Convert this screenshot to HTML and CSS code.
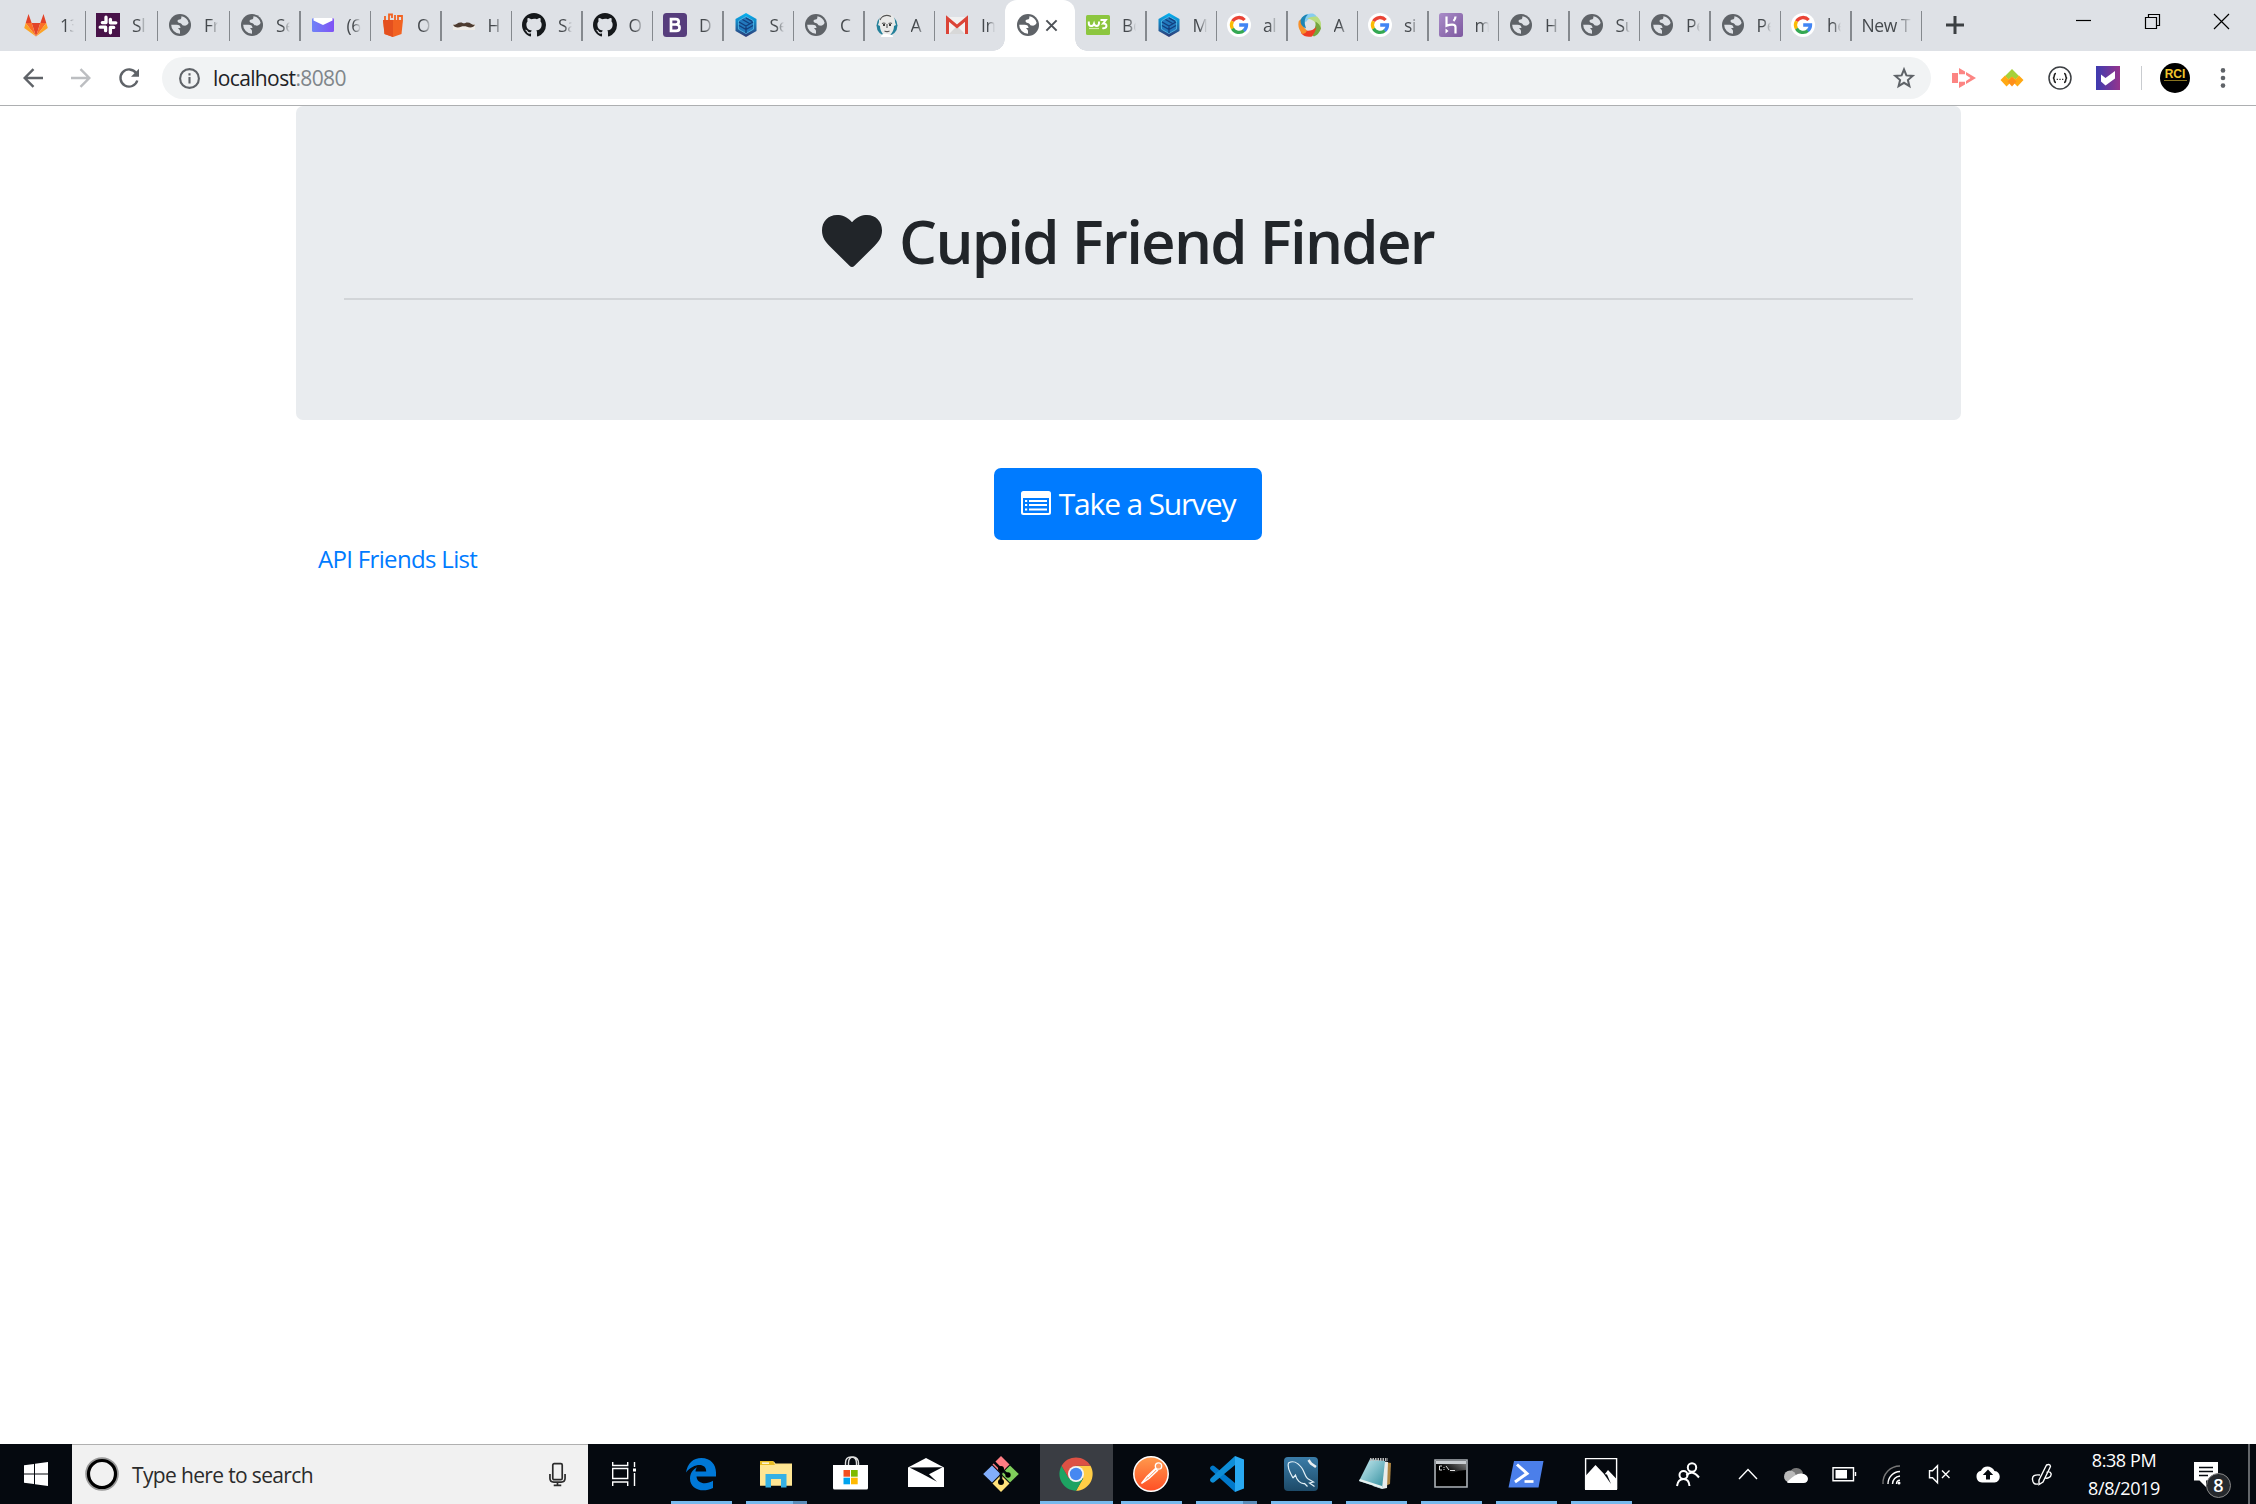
FILE: index.html
```html
<!DOCTYPE html>
<html lang="en">
<head>
<meta charset="utf-8">
<title>Cupid Friend Finder</title>
<link rel="stylesheet" href="styles.css">
</head>
<body>
<svg class="sprite" aria-hidden="true">
  <defs>
    <linearGradient id="g-yahoo" x1="0" x2="1"><stop offset="0" stop-color="#6f83f7"/><stop offset="1" stop-color="#8052f5"/></linearGradient>
    <linearGradient id="g-heroku" x1="0" y1="0" x2="1" y2="1"><stop offset="0" stop-color="#a98cc8"/><stop offset="1" stop-color="#7d589f"/></linearGradient>
    <linearGradient id="g-check" x1="0" x2="1"><stop offset="0" stop-color="#3d3bb0"/><stop offset="1" stop-color="#96348c"/></linearGradient>
    <linearGradient id="g-post" x1="0" y1="0" x2="0" y2="1"><stop offset="0" stop-color="#ff9a4d"/><stop offset="1" stop-color="#ff4f25"/></linearGradient>
    <linearGradient id="g-mysql" x1="0" y1="0" x2="0" y2="1"><stop offset="0" stop-color="#3a7ca8"/><stop offset="1" stop-color="#1d4a68"/></linearGradient>
    <linearGradient id="g-note" x1="0" y1="0" x2="1" y2="1"><stop offset="0" stop-color="#cfeef2"/><stop offset=".5" stop-color="#7fbfca"/><stop offset="1" stop-color="#2f8c9b"/></linearGradient>
    <linearGradient id="g-cmd" x1="0" y1="1" x2="1" y2="0"><stop offset=".5" stop-color="#000"/><stop offset="1" stop-color="#777"/></linearGradient>
    <linearGradient id="g-hex" x1="0" y1="0" x2="0" y2="1"><stop offset="0" stop-color="#04b4f4"/><stop offset="1" stop-color="#2f3b76"/></linearGradient>
  </defs>
  <symbol id="globe" viewBox="0 0 24 24"><circle cx="12" cy="12" r="11" fill="#5f6368"/><path d="M3.200 11.800h5.300c2.800 0 4 1.200 4 3.300h-2.300c0 1.300 1.800 1.300 1.800 3v2.700A8.900 8.900 0 0 1 3.200 11.800ZM13.400 3.200a9 9 0 0 1 7.200 6.600c-.6 2-2.300 3-4.600 2.800-2.600-.2-1.900-2.300-4.200-2.600-2.800-.4-3-3.300-.4-3.500 2-.2 2-1.500 2-3.300Z" fill="currentColor"/></symbol>
  <symbol id="gitlab" viewBox="0 0 24 24"><path d="M12 23.500 7.700 10h8.600Z" fill="#e24329"/><path d="M12 23.500 1.700 10h6Z" fill="#fc6d26"/><path d="M12 23.500 22.300 10h-6Z" fill="#fc6d26"/><path d="m1.700 10-1.500 5L12 23.500ZM22.300 10l1.500 5L12 23.500Z" fill="#fca326"/><path d="m1.700 10 2.800-9 3.200 9ZM22.300 10l-2.800-9-3.200 9Z" fill="#e24329"/></symbol>
  <symbol id="slack" viewBox="0 0 24 24"><path d="M0 0h24v24H0z" fill="#481349"/><g stroke="#fff" stroke-width="3.300" stroke-linecap="round"><path d="M10 4.200v5.400M14.400 6.300v3.300M14.400 14.400v5.400M9.600 14.400v3.300M4.200 14.200h5.400M6.300 9.600h3.300M14.400 9.800h5.400M14.400 14.400h3.300"/></g></symbol>
  <symbol id="yahoo" viewBox="0 0 24 24"><rect x="1" y="5" width="22" height="14" rx="1.500" fill="url(#g-yahoo)"/><path d="M2.500 5h19v2.500L12 12 2.500 7.500Z" fill="#fff"/></symbol>
  <symbol id="basket" viewBox="0 0 24 24"><path d="M2 7h20l-1.500 14L12 24l-8.500-3Z" fill="#f26322"/><path d="M2 7h10v17l-8.500-3Z" fill="#e4501f"/><path d="M4 7V3m4 4V1.500h3V5m3 2V2m3 5V3h4v4" fill="none" stroke="#f26322" stroke-width="1.800"/></symbol>
  <symbol id="moustache" viewBox="0 0 24 24"><path d="M1 11h22v6H1z" fill="#efece7"/><path d="M1 11.500c2.500 1.500 4-2 7.500-2 1.800 0 2.500.8 3.500.8s1.700-.8 3.500-.8c3.500 0 5 3.500 7.500 2-.8 3-5 3.500-8 2.300-1.500-.6-2-.5-3-.5s-1.500-.1-3 .5c-3 1.200-7.200.7-8-2.300Z" fill="#4d3b30"/></symbol>
  <symbol id="github" viewBox="0 0 16 16"><path fill="#15181b" d="M8 0C3.580 0 0 3.580 0 8c0 3.540 2.290 6.530 5.470 7.590.4.070.55-.17.55-.38v-1.490c-2.230.48-2.700-.94-2.700-.94-.36-.92-.89-1.170-.89-1.170-.73-.5.050-.49.050-.49.810.06 1.230.83 1.230.83.720 1.230 1.880.87 2.340.67.070-.52.280-.87.510-1.070-1.780-.2-3.640-.89-3.640-3.950 0-.87.310-1.590.820-2.150-.08-.2-.36-1.020.08-2.120 0 0 .67-.21 2.200.82A7.600 7.600 0 0 1 8 3.870c.68 0 1.360.09 2 .27 1.530-1.040 2.200-.82 2.200-.82.440 1.100.16 1.920.08 2.120.51.560.82 1.270.82 2.150 0 3.070-1.870 3.750-3.650 3.950.29.250.54.730.54 1.480v2.200c0 .21.150.46.550.38A8 8 0 0 0 16 8c0-4.420-3.580-8-8-8Z"/></symbol>
  <symbol id="bootstrap" viewBox="0 0 24 24"><rect width="24" height="24" rx="3.500" fill="#563d7c"/><path fill="none" stroke="#fff" stroke-width="2.700" d="M8 6.200h4.700c4 0 4 5.300 0 5.300H8h5.200c4.500 0 4.500 6.300 0 6.300H8ZM8 5v14"/></symbol>
  <symbol id="hexa" viewBox="0 0 24 24"><path d="M12 0 22.500 6v12L12 24 1.500 18V6Z" fill="url(#g-hex)"/><path d="m12 3.500 7.500 4.300v8.400L12 20.500l-7.500-4.300V7.800Z" fill="#2379bd" stroke="#5cc5ee" stroke-width=".7"/><path d="m5 9 7 4 7-4M5 12.500l7 4 7-4M12 13v7M8.500 6.500l7 4M12 5l6 3.400" fill="none" stroke="#123f7e" stroke-width="1.300"/></symbol>
  <symbol id="baby" viewBox="0 0 24 24"><circle cx="12" cy="12.500" r="10.500" fill="#23809a"/><path d="M4 9c-1-11 17-11 16 0l1 3-2 1c0 6-4 10-7 10s-7-4-7-10l-2-1Z" fill="#e9e9e8"/><path d="M6 24c0-3 3-4 6-3s6 0 6 3Z" fill="#fff"/><path d="M7 10.500q2-1 3.500 0M13.500 10.500q2-1 3.500 0M12 11v4M9.500 18q2.500 1.200 5 0M7 4q4-3 9-.5M5 7q1-3 4-4" stroke="#555" fill="none" stroke-width="1.100"/><circle cx="9" cy="12" r="1"/><circle cx="15" cy="12" r="1"/></symbol>
  <symbol id="gmail" viewBox="0 0 24 24"><rect x="1" y="4" width="22" height="17" rx="1.500" fill="#f1f1f1"/><path d="m4 21 8-8 8 8Z" fill="#d8d8d8"/><path d="M2.500 21V5.500L12 13.500l9.500-8V21" fill="none" stroke="#db4437" stroke-width="3"/></symbol>
  <symbol id="w3" viewBox="0 0 24 24"><rect y="2" width="24" height="20" rx="1.500" fill="#8cc63f"/><path d="M2.800 8.500v1.800q0 2.700 2.200 2.700t3-2.200q.6 2.200 2.700 2.200t2.300-2.700V8.500M14.500 7h5.300l-2.800 3.600c5.300-.4 4 6-.6 4.400" fill="none" stroke="#fff" stroke-width="2"/><path d="M3 15.500h10" stroke="#d4edb0" stroke-width="1.200"/></symbol>
  <symbol id="google" viewBox="0 0 24 24"><circle cx="12" cy="12" r="12" fill="#fff"/><g fill="none" stroke-width="3.300"><path d="M17.600 7A7.500 7.500 0 0 0 5.500 8.300" stroke="#ea4335"/><path d="M5.500 8.200a7.500 7.500 0 0 0 0 7.500" stroke="#fbbc05"/><path d="M5.500 15.700A7.500 7.500 0 0 0 17 17.500" stroke="#34a853"/><path d="M12.200 12h7.300c0 2.500-1 4.300-2.700 5.700" stroke="#4285f4"/></g></symbol>
  <symbol id="swirl" viewBox="0 0 24 24"><path d="M3 6.500Q7-.5 15 .6q3 1 4 4Q11 4 8 9Z" fill="#86cdf0"/><path d="M9 5.500q5-2.500 10-2 5 4.500 4 11-2 2-4 1.500 0-7-6-9.500Z" fill="#b9dc80"/><path d="M17.500 8.500q4.500 2.500 5.500 7-2 6-7 8-3-1-3.500-3.500 6-4 5-11.500Z" fill="#76a53d"/><path d="M18.500 14q-1 5-4.500 9.500-7 1.500-11-3.500 0-3 2-4 6 4.500 13.500-2Z" fill="#ef3c24"/><path d="M9 17.500q-1 3-4.500 3.500Q-1 15 .8 8q2-2.300 4.200-2-2 7 4 11.500Z" fill="#f7902a"/><path d="M2.500 7Q5 1.500 10 1.500 4.500 6 8 15.500 2 13 2.500 7Z" fill="#1d85b5"/></symbol>
  <symbol id="heroku" viewBox="0 0 24 24"><rect width="24" height="24" rx="2.500" fill="url(#g-heroku)"/><path d="M7.500 3.500v9.300c3-1.300 9-2.500 9 1.200v6.500M16.500 3.500q0 2.500-2 4.500" fill="none" stroke="#fff" stroke-width="2.200"/><path d="m6.500 15.500 3 2.500-3 2.500Z" fill="#fff"/></symbol>
</svg>

<div class="screen">
  <header class="tabstrip">
    <div class="tab wide"><svg class="fav"><use href="#gitlab"/></svg><span>13</span></div>
    <div class="tab wide"><svg class="fav"><use href="#slack"/></svg><span>Sl</span></div>
    <div class="tab wide"><svg class="fav"><use href="#globe"/></svg><span>Fr</span></div>
    <div class="tab"><svg class="fav"><use href="#globe"/></svg><span>Se</span></div>
    <div class="tab"><svg class="fav"><use href="#yahoo"/></svg><span>(6</span></div>
    <div class="tab"><svg class="fav"><use href="#basket"/></svg><span>O</span></div>
    <div class="tab"><svg class="fav"><use href="#moustache"/></svg><span>H</span></div>
    <div class="tab"><svg class="fav"><use href="#github"/></svg><span>Sa</span></div>
    <div class="tab"><svg class="fav"><use href="#github"/></svg><span>O</span></div>
    <div class="tab"><svg class="fav"><use href="#bootstrap"/></svg><span>D</span></div>
    <div class="tab"><svg class="fav"><use href="#hexa"/></svg><span>Se</span></div>
    <div class="tab"><svg class="fav"><use href="#globe"/></svg><span>C</span></div>
    <div class="tab"><svg class="fav"><use href="#baby"/></svg><span>A</span></div>
    <div class="tab before-active"><svg class="fav"><use href="#gmail"/></svg><span>In</span></div>
    <div class="tab active"><svg class="fav"><use href="#globe"/></svg><svg class="close" viewBox="0 0 14 14"><path d="m1.500 1.500 11 11m0-11-11 11"/></svg></div>
    <div class="tab"><svg class="fav"><use href="#w3"/></svg><span>Bo</span></div>
    <div class="tab"><svg class="fav"><use href="#hexa"/></svg><span>M</span></div>
    <div class="tab"><svg class="fav"><use href="#google"/></svg><span>al</span></div>
    <div class="tab"><svg class="fav"><use href="#swirl"/></svg><span>A</span></div>
    <div class="tab"><svg class="fav"><use href="#google"/></svg><span>si</span></div>
    <div class="tab"><svg class="fav"><use href="#heroku"/></svg><span>m</span></div>
    <div class="tab"><svg class="fav"><use href="#globe"/></svg><span>H</span></div>
    <div class="tab"><svg class="fav"><use href="#globe"/></svg><span>Su</span></div>
    <div class="tab"><svg class="fav"><use href="#globe"/></svg><span>Pe</span></div>
    <div class="tab"><svg class="fav"><use href="#globe"/></svg><span>Pe</span></div>
    <div class="tab"><svg class="fav"><use href="#google"/></svg><span>he</span></div>
    <div class="tab plain"><span>New T</span></div>
    <svg class="newtab" viewBox="0 0 18 18"><path d="M9 0v18M0 9h18"/></svg>
    <div class="wincontrols">
      <svg viewBox="0 0 15 15"><path d="M0 6.500h15"/></svg>
      <svg viewBox="0 0 15 15"><path d="M.5 3.500h11v11H.5zM3.500 3.500v-3h11v11h-3"/></svg>
      <svg viewBox="0 0 15 15"><path d="m0 0 15 15m0-15L0 15"/></svg>
    </div>
  </header>

  <nav class="toolbar">
    <div class="navbtns">
      <svg viewBox="0 0 20 20"><path d="M20 10H2M10.500 1.200 1.700 10l8.800 8.800"/></svg>
      <svg class="dim" viewBox="0 0 20 20"><path d="M0 10h18M9.500 1.200l8.800 8.800-8.800 8.800"/></svg>
      <svg viewBox="0 0 20 20"><path d="M17.200 5.200A8.600 8.600 0 1 0 18.300 12.500"/><path class="fill" d="M20 .8v8h-8Z"/></svg>
    </div>
    <div class="omnibox">
      <svg class="info" viewBox="0 0 21 21"><circle cx="10.500" cy="10.500" r="9.400"/><path d="M10.500 9v6.500M10.500 5.300v2.300"/></svg>
      <p class="url">localhost<span>:8080</span></p>
      <svg class="star" viewBox="0 0 22 22"><path d="m11 2.500 2.400 5.900 6.300.5-4.800 4.100 1.500 6.200-5.400-3.400-5.400 3.400L7.100 13 2.300 8.900l6.300-.5Z"/></svg>
    </div>
    <div class="exts">
      <svg viewBox="0 0 24 24"><path d="M0 7h6v10H0zM7 2l6 3.500V8H7Zm0 14h6v2.500L7 22ZM14 6l10 6-10 6v-3l4.500-3L14 9Z" fill="#fc8583"/><path d="M7 7.500h6M7 16.500h6" stroke="#fc8583" stroke-width="1.500"/></svg>
      <svg viewBox="0 0 24 24"><path d="m12 3 7 7-3.500 3.500L12 11l-3.500 2.500L5 10Z" fill="#a5d13a"/><path d="m5 9.500 3.500 3.700L12 10.500l3.500 2.700L19 9.500l4.500 4.500-6 6.500-5.500-5.500-5.500 5.500-6-6.500Z" fill="#ffa914"/><path d="m12 11 4.500 4.500-4.500 5-4.500-5Z" fill="#ff8f1a"/></svg>
      <svg viewBox="0 0 24 24"><circle cx="12" cy="12" r="11" fill="#fff" stroke="#3c3f43" stroke-width="1.500"/><path d="M8 7.500c-3 0-.5 4-3 4.500 2.500.5 0 4.500 3 4.500M16 7.500c3 0 .5 4 3 4.500-2.500.5 0 4.500-3 4.500" fill="none" stroke="#222" stroke-width="1.600"/><path d="M8.700 13.300h1.200m1.500 0h1.200m1.500 0h1.200" stroke="#222" stroke-width="1.300"/></svg>
      <svg viewBox="0 0 24 24"><path d="M0 0h24v24H0z" fill="url(#g-check)"/><path d="M5 8.500 9.500 12 19 5v7.500L9.500 19.500 5 15.500Z" fill="#fff"/></svg>
    </div>
    <div class="avatar"><b>RCI</b><i></i></div>
    <svg class="dots" viewBox="0 0 6 20"><circle cx="3" cy="2.400" r="2.300"/><circle cx="3" cy="10" r="2.300"/><circle cx="3" cy="17.600" r="2.300"/></svg>
  </nav>

  <main class="page">
    <section class="jumbotron">
      <h1><svg class="heart" viewBox="0 0 60 52"><path d="M30 7.200C35 1.500 40 0 45 0c9 0 15 6.500 15 15.500 0 7-3.500 11.500-8 16L32.500 50.800q-2.500 2.400-5 0L8 31.500c-4.500-4.500-8-9-8-16C0 6.500 6 0 15 0c5 0 10 1.500 15 7.200Z"/></svg><span>Cupid Friend Finder</span></h1>
      <hr>
    </section>
    <a class="btn" href="#"><svg viewBox="0 0 30 24"><path fill-rule="evenodd" d="M2.500 0h25A2.500 2.500 0 0 1 30 2.500v19a2.500 2.500 0 0 1-2.500 2.500h-25A2.500 2.500 0 0 1 0 21.500v-19A2.500 2.500 0 0 1 2.500 0ZM2 7v14.200q0 .8.800.8h24.400q.8 0 .8-.8V7Z"/><path d="M4 9h2.200v2H4zM8 9h18v2H8zM4 13h2.200v2H4zM8 13h18v2H8zM4 17.500h2.200v2H4zM8 17.500h18v2H8z"/></svg><span>Take a Survey</span></a>
    <a class="api" href="#">API Friends List</a>
  </main>

  <footer class="taskbar">
    <div class="start"><svg viewBox="0 0 24 24"><path d="M0 3.300 10 2v9.500H0ZM11 1.800 24 0v11.500H11ZM0 12.500h10V22L0 20.700ZM11 12.500h13V24l-13-1.800Z"/></svg></div>
    <div class="search">
      <svg class="cortana" viewBox="0 0 34 34"><circle cx="17" cy="17" r="15.300" stroke="#999" stroke-width="3"/><circle cx="17" cy="17" r="13.500" stroke="#000" stroke-width="3.200"/></svg>
      <span>Type here to search</span>
      <svg class="mic" viewBox="0 0 18 25"><rect x="4" y="1" width="10" height="17" rx="1.500"/><path d="M1 12v4.500q0 4 4 4h8q4 0 4-4V12M9 20.500V24M5 24h8"/></svg>
    </div>
    <div class="taskview"><svg viewBox="0 0 24 24"><path d="M.7 0v3.500h15V0M.7 6.500h15v10H.7zM.7 24v-4h15v4M22.500 0v5M22.500 11v13"/><path d="M21 6.500h3v3h-3z" fill="#fff" stroke="none"/></svg></div>
    <div class="apps">
      <div class="app run"><svg viewBox="0 0 36 36"><path d="M3 16.500C4.500 7 10.500 2 18.300 2 28 2 33 9 33 16.500v4H13.500c.5 7.500 10 8.500 16.500 4.300v7.300c-11 5.300-23 1-23-9.600 0-5 2.800-9.200 7-11.300-1 1.300-1.300 2.600-1.500 4.300h10.700C23.200 6 10 7.500 3 16.500Z" fill="#0078d7"/></svg></div>
      <div class="app run split"><svg viewBox="0 0 36 36"><path d="M2 5.500h14l1.500 2H34v22H2Z" fill="#ffe28a"/><path d="M2 5h13l2 4H2z" fill="#e9bd23"/><path d="M4 6.500h7v1.300H4z" fill="#fff"/><path d="M2 9h32v20.500H2z" fill="#ffe694"/><path d="M7.500 18h21v13.500H23V23H13v8.500H7.500Z" fill="#35b1e5"/></svg></div>
      <div class="app"><svg viewBox="0 0 36 36"><path d="M12.500 10V7q0-6 5.500-6t5.500 6v3M15.500 10V7q0-6 5-6 5 1 5 6v3" fill="none" stroke="#ddd" stroke-width="1.400"/><path d="M0 9h35v23q0 1.500-1.500 1.500h-32Q0 33.500 0 32Z" fill="#fff"/><path d="M10.500 14H17v6.700h-6.500z" fill="#f25022"/><path d="M18 14h6.700v6.700H18z" fill="#7fba00"/><path d="M10.500 21.700H17v6.600h-6.500z" fill="#00a4ef"/><path d="M18 21.700h6.700v6.600H18z" fill="#ffb900"/></svg></div>
      <div class="app"><svg viewBox="0 0 36 36"><path d="M0 11.500 18 2l18 9.500V31H0Z" fill="#fff"/><path d="m1.500 11.500 33-.2-13.500 7 8 7.500L14.500 18Z" fill="#05090f"/></svg></div>
      <div class="app"><svg viewBox="0 0 36 36"><path d="m18 0 8.500 8.500-8.500 8.500-8.500-8.500Z" fill="#ff7d83"/><path d="m9 9.500 8.500 8.500L9 26.500.2 18Z" fill="#82aefb"/><path d="m27 9.500 8.800 8.500-8.800 8.500-8.500-8.500Z" fill="#80cf5b"/><path d="m18 19 8.500 8.500L18 36l-8.500-8.500Z" fill="#ffe27b"/><path d="m11 6 7 7v13M18 13l7 6" fill="none" stroke="#05090f" stroke-width="2.600"/><circle cx="18" cy="13" r="3"/><circle cx="25" cy="19" r="2.700"/><circle cx="18" cy="26" r="3"/></svg></div>
      <div class="app run current"><svg viewBox="0 0 36 36"><path d="M32.500 9.800A16.700 16.700 0 0 1 18 34.700l7.200-12.500L18 9.800Z" fill="#ffcd46"/><path d="M3.600 9.700A16.700 16.700 0 0 0 18 34.700l7.200-12.500H10.800Z" fill="#1da362"/><path d="M3.600 9.700A16.700 16.700 0 0 1 32.500 9.800H18l-7.200 12.400Z" fill="#dd5144"/><circle cx="18" cy="18" r="8" fill="#f4f4f4"/><circle cx="18" cy="18" r="6.200" fill="#4688f1"/></svg></div>
      <div class="app run"><svg viewBox="0 0 36 36"><circle cx="18" cy="18" r="17.200" fill="url(#g-post)" stroke="#fff" stroke-width="1.500"/><path d="m8.500 27.500 5.500-7 8.500-8 2 2-8.500 8-7.500 5Z" fill="#ffad80" stroke="#fff" stroke-width="1.400"/><circle cx="25.500" cy="10" r="3.200" fill="#ff9a60" stroke="#fff" stroke-width="1.300"/><path d="m15 21 8-8" stroke="#fff"/></svg></div>
      <div class="app run split"><svg viewBox="0 0 36 36"><path d="M27 0v36L3.500 14.500q-3-2.500 0-4.500 1.500-1 3 .2L27 27Z" fill="#0179cb"/><path d="M27 9 6.500 26q-1.500 1.200-3 .2-3-2 0-4.700L27 0Z" fill="#0e8ed7"/><path d="m27 0 9 3.500v29L27 36Z" fill="#29a9f2"/></svg></div>
      <div class="app run"><svg viewBox="0 0 36 36"><rect x="1" y="1" width="34" height="34" rx="4" fill="url(#g-mysql)"/><path d="M10 22c-4-7-6-12-4.500-15 4-2.500 9-1 13 4.500 3 4 3.500 9 6 11l6 3.500-4 1 5 3.500M10 22l2.500-3c1 5 5 9 9 8.500l3 3" fill="none" stroke="#e4f1f7" stroke-width="1.200"/><path d="m25.500 4 2.500 3.500L33 11" fill="none" stroke="#e9eef1" stroke-width="2.600"/></svg></div>
      <div class="app run"><svg viewBox="0 0 36 36"><path d="m27 6 6 1-1 21-5 2Z" fill="#ad8543"/><path d="m13 4 17 2-1 26-5 1-9-3Z" fill="#e8eceb"/><path d="m12 3-11 22 23 7.500L27 5Z" fill="url(#g-note)"/><path d="m1 25 23 7.500V30L2 23Z" fill="#e9f2f0"/><path d="M12 3.500h18" stroke="#bbb" stroke-width="3" stroke-dasharray="1.500 1"/></svg></div>
      <div class="app run"><svg viewBox="0 0 36 36"><path d="M2 4h32v27H2z" fill="#111" stroke="#aab0b5" stroke-width="1.600"/><path d="M3 5h30v3H3z" fill="#c9cdd1"/><path d="M3 8h30v22H3z" fill="#000"/><path d="M3 8h30v6Q18 14 8 26l-5 2Z" fill="url(#g-cmd)"/><path d="M9 10H6.500v4H9M11 11v1m0 1v1m2-4 3 4m1 .5h5" fill="none" stroke="#ddd"/></svg></div>
      <div class="app run"><svg viewBox="0 0 36 36"><path d="M6 5h29.500L30.500 31.500H.5Z" fill="#4b7fea"/><path d="m9 8.500 10 9-12 8.500" fill="none" stroke="#fff" stroke-width="3"/><path d="M16.500 25.500h9" stroke="#fff" stroke-width="2.700"/></svg></div>
      <div class="app run"><svg viewBox="0 0 36 36"><path d="M2.600 2.600h31v30h-31z" fill="none" stroke="#fff" stroke-width="1.400"/><path d="M2 20.500 12.500 9l9 9.500L25 14l9 9.500V34H2Z" fill="#fff"/><path d="m21 18 7 10-4-9.500" fill="#05090f"/></svg></div>
    </div>
    <div class="people"><svg viewBox="0 0 24 24"><circle cx="16" cy="5.500" r="4.200"/><circle cx="7.500" cy="13" r="4"/><path d="M10.500 13.500q5.500-6.500 12.500 2M1 24q1-7 6.500-7t6 7"/></svg></div>
    <div class="tray">
      <svg viewBox="0 0 24 24"><path d="m3 17 9-9.500 9 9.500"/></svg>
      <svg viewBox="0 0 24 24"><g stroke="none"><path d="M6 10a7 7 0 0 1 13 1l-6 6Z" fill="#777"/><circle cx="6" cy="14.500" r="6" fill="#b9b9b9"/><path d="M3 20q9-9.500 15-8.500c8 1 7.500 9.500 1.500 9.500H5q-2 0-2-1Z" fill="#fff"/></g></svg>
      <svg viewBox="0 0 24 24"><path d="M1 5.700h20.500v13H1zM23.500 10v4"/><path d="M3.500 8H15v8.500H3.500z" fill="#fff" stroke="none"/></svg>
      <svg viewBox="0 0 24 24"><path d="M3 22A17 17 0 0 1 20 4" stroke="#777"/><path d="M8 22A12.500 12.500 0 0 1 20 9.500M12.500 22q.5-7 7.500-8"/><path d="M16.500 22q0-3.500 3.500-3.700"/><circle cx="19" cy="21" r="1.500" fill="#fff" stroke="none"/></svg>
      <svg viewBox="0 0 24 24"><path d="M1.500 8.700h3l5-5v17l-5-5h-3zM14 8.500l7.500 7.500m0-7.500L14 16"/></svg>
      <svg viewBox="0 0 24 24"><path fill="#fff" stroke="none" fill-rule="evenodd" d="M6 20.500a6 6 0 0 1-1-11.800C7 3 16 3 18.500 9c7 .5 7 11 0 11.500ZM12 7.500 6.800 13H10v4.500h4V13h3.200Z"/></svg>
      <svg class="pen" viewBox="0 0 24 24"><path d="m9 18 7.500-15q3.500-1.500 4 1.500L13 20l-4 2.500ZM10 13q-8-1-7.500 4.500T8 22m7-7c1 3 7 0 6-3.500-1-3-4.500-1-4.500-1"/></svg>
    </div>
    <div class="clock"><span>8:38 PM</span><span>8/8/2019</span></div>
    <div class="notif"><svg viewBox="0 0 24 26"><path d="M0 0h24v18.500H12V25l-6.500-6.500H0Z" fill="#fff"/><path d="M5 5.500h14M5 9.500h14M5 13.500h9" stroke="#05090f" stroke-width="1.300"/></svg><span class="badge">8</span></div>
  </footer>
</div>
</body>
</html>
```

FILE: styles.css
```css
* { box-sizing: border-box; }

body {
  margin: 0;
  font-family: "Open Sans", "Noto Sans", sans-serif;
  background: #fff;
}

svg { display: block; flex: none; overflow: visible; }
.sprite { position: absolute; width: 0; height: 0; }

.screen {
  width: 2256px;
  height: 1504px;
  display: flex;
  flex-direction: column;
  overflow: hidden;
}

/* Tab strip */
.tabstrip {
  flex: none;
  height: 51px;
  background: #dee1e6;
  display: flex;
  padding-left: 13px;
}
.tab {
  position: relative;
  flex: none;
  width: 70.5px;
  height: 51px;
  padding-left: 11px;
  display: flex;
  align-items: center;
}
.tab.wide { width: 72px; }
.tab::after {
  content: "";
  position: absolute;
  right: -1px;
  top: 11px;
  width: 1.5px;
  height: 30px;
  background: #85898e;
}
.tab.before-active::after { display: none; }
.fav { width: 24px; height: 24px; margin-top: -1px; color: #dee1e6; }
.tab span {
  width: 14px;
  margin: -2px 0 0 12px;
  overflow: hidden;
  white-space: nowrap;
  font-size: 17.5px;
  line-height: 30px;
  letter-spacing: -.4px;
  color: #45494d;
  mask-image: linear-gradient(90deg, #000 45%, transparent);
}
.tab.plain span { width: 50px; margin-left: 0; mask-image: linear-gradient(90deg, #000 70%, transparent); }
.tab.active { background: #fff; border-radius: 12px 12px 0 0; gap: 5px; }
.tab.active .fav { color: #fff; }
.tab.active::before,
.tab.active::after {
  content: "";
  display: block;
  position: absolute;
  top: auto;
  bottom: 0;
  width: 12px;
  height: 12px;
}
.tab.active::before { left: -12px; background: radial-gradient(circle at 0 0, transparent 11.5px, #fff 12px); }
.tab.active::after { right: -12px; background: radial-gradient(circle at 100% 0, transparent 11.5px, #fff 12px); }
.close { width: 13px; height: 13px; margin-top: -1px; stroke: #4d5156; stroke-width: 2.2; }
.newtab { width: 18px; height: 18px; margin: 16px 0 0 24.5px; stroke: #3c4043; stroke-width: 3; }
.wincontrols { display: flex; gap: 54px; margin-left: auto; padding: 14px 27px 0 0; }
.wincontrols svg { width: 15px; height: 15px; fill: none; stroke: #000; stroke-width: 1.2; }

/* Toolbar */
.toolbar {
  flex: none;
  height: 55px;
  border-bottom: 1px solid #adafb1;
  display: flex;
  align-items: center;
  padding-left: 23px;
}
.navbtns { display: flex; gap: 28px; width: 139px; }
.navbtns svg { width: 20px; height: 20px; margin-top: -1px; fill: none; stroke: #5f6368; stroke-width: 2.4; }
.navbtns .dim { stroke: #bcbec1; }
.navbtns .fill { fill: #5f6368; stroke: none; }
.omnibox {
  width: 1769px;
  height: 42px;
  border-radius: 21px;
  background: #f1f3f4;
  display: flex;
  align-items: center;
  padding: 0 16px 0 17px;
}
.info { width: 21px; height: 21px; fill: none; stroke: #5f6368; stroke-width: 2.1; }
.url { margin: 0 0 0 13px; font-size: 21px; line-height: 30px; letter-spacing: -.62px; color: #202124; }
.url span { color: #80868b; }
.star { width: 22px; height: 22px; margin-left: auto; fill: none; stroke: #5f6368; stroke-width: 2; }
.exts {
  display: flex;
  gap: 24px;
  margin-left: 21px;
  padding-right: 21px;
  border-right: 1px solid #c9ccd0;
}
.exts svg { width: 24px; height: 24px; }
.avatar {
  width: 30px;
  height: 30px;
  margin-left: 18px;
  border-radius: 50%;
  background: #000;
  display: flex;
  flex-direction: column;
  align-items: center;
  padding-top: 5px;
}
.avatar b { font: bold 12px/12px "Liberation Sans", sans-serif; color: #f0c52d; }
.avatar i { width: 23px; height: 1px; background: #8a7420; }
.dots { width: 6px; height: 20px; margin-left: 30px; fill: #5f6368; }

/* Page content */
.page {
  flex: 1;
  width: 1665px;
  margin: 0 auto;
  display: flex;
  flex-direction: column;
  align-items: center;
}
.jumbotron {
  width: 100%;
  height: 314px;
  padding: 96px 48px;
  border-radius: 7px;
  background: #e9ecef;
}
h1 {
  margin: 0;
  height: 72px;
  padding-top: 5px;
  display: flex;
  justify-content: center;
  align-items: center;
  gap: 17px;
  font-size: 60px;
  line-height: 72px;
  font-weight: 600;
  letter-spacing: -1.75px;
  color: #212529;
  white-space: nowrap;
}
.heart { width: 60px; height: 52px; fill: #212529; }
hr { margin: 24px 0 0; border: 0; height: 2px; background: #d2d5d8; }
.btn {
  margin-top: 48px;
  width: 268px;
  height: 72px;
  padding-bottom: 2px;
  border-radius: 7px;
  background: #007bff;
  color: #fff;
  display: flex;
  align-items: center;
  justify-content: center;
  gap: 8px;
  font-size: 30px;
  letter-spacing: -1.2px;
  text-decoration: none;
  white-space: nowrap;
}
.btn svg { width: 30px; height: 24px; fill: #fff; }
.api {
  align-self: flex-start;
  margin: 1px 0 0 22.5px;
  font-size: 24px;
  line-height: 36px;
  letter-spacing: -.67px;
  color: #007bff;
  text-decoration: none;
}

/* Taskbar */
.taskbar { flex: none; height: 60px; background: #05090f; display: flex; color: #fff; }
.start { width: 72px; display: flex; align-items: center; justify-content: center; }
.start svg { width: 24px; height: 24px; fill: #fff; }
.search {
  width: 516px;
  background: #f1f1f1;
  border-top: 1px solid #b0b0b0;
  display: flex;
  align-items: center;
  padding: 0 22px 0 13px;
  font-size: 21px;
  letter-spacing: -.65px;
  color: #2b2b2b;
}
.search span { margin: 0 0 0 13px; }
.search svg { fill: none; }
.cortana { width: 34px; height: 34px; margin-top: -1px; }
.mic { width: 17px; height: 25px; margin: -1px 0 0 auto; stroke: #2b2b2b; stroke-width: 1.8; }
.taskview { width: 76px; display: flex; align-items: center; padding-left: 24px; }
.taskview svg { width: 24px; height: 24px; fill: none; stroke: #fff; stroke-width: 1.4; }
.apps { display: flex; }
.app {
  position: relative;
  width: 75px;
  padding-right: 1px;
  display: flex;
  align-items: center;
  justify-content: center;
}
.app svg { position: relative; width: 36px; height: 36px; }
.app.run::after {
  content: "";
  position: absolute;
  left: 7px;
  bottom: 0;
  width: 61px;
  height: 3px;
  background: #76b9ed;
}
.app.split::after { background: linear-gradient(90deg, #76b9ed 47px, #5a8bb8 47px); }
.app.current::before { content: ""; position: absolute; left: 1px; top: 0; width: 73px; height: 60px; background: #3a3d43; }
.app.current::after { left: 1px; width: 73px; }
.people { width: 85px; display: flex; align-items: center; padding-left: 37px; }
.people svg { width: 24px; height: 24px; fill: none; stroke: #fff; stroke-width: 2; }
.tray { display: flex; align-items: center; gap: 24px; padding-left: 12px; width: 348px; }
.tray svg { width: 24px; height: 24px; fill: none; stroke: #fff; stroke-width: 1.4; }
.tray .pen { margin-left: 6px; }
.clock {
  width: 104px;
  display: flex;
  flex-direction: column;
  align-items: center;
  padding-top: 2px;
  font-size: 18px;
  line-height: 28px;
  letter-spacing: -.4px;
}
.notif { position: relative; flex: 1; padding: 18px 0 0 18px; border-right: 2px solid #64676b; margin-right: 6px; }
.notif svg { width: 24px; height: 26px; }
.badge {
  position: absolute;
  left: 30px;
  top: 29px;
  width: 25px;
  height: 25px;
  border: 1px solid #888;
  border-radius: 50%;
  background: #26292d;
  font-size: 18px;
  font-weight: 600;
  line-height: 23px;
  text-align: center;
}
```
